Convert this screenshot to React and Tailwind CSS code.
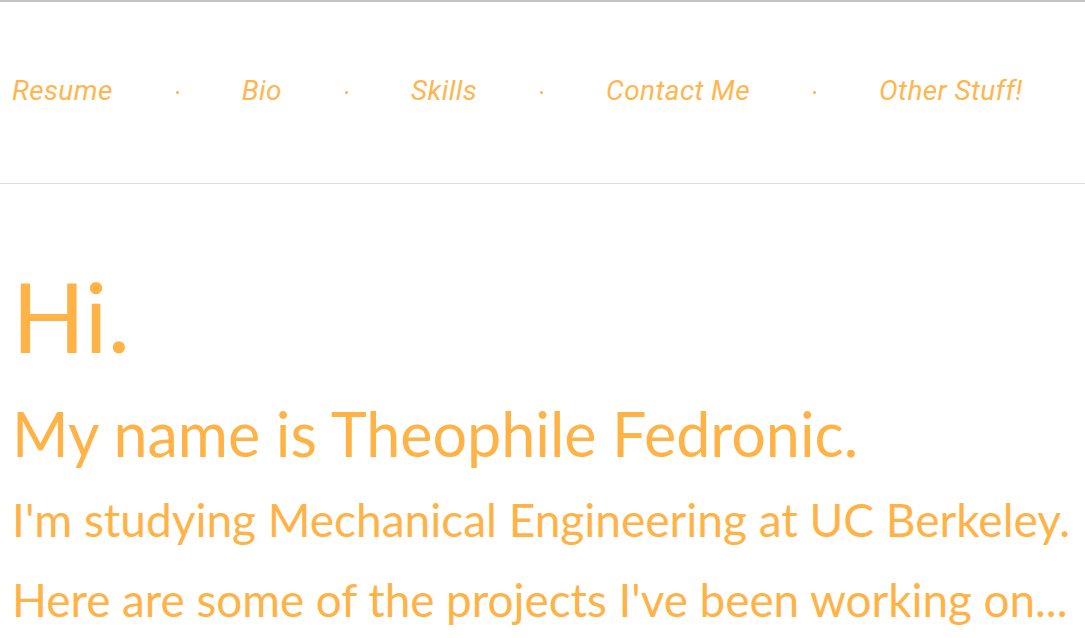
import React from 'react';

const links = ['Resume', 'Bio', 'Skills', 'Contact Me', 'Other Stuff!'];

function App() {
  return (
    <div className="min-h-screen bg-white border-t-2 border-[#c4c4c4] text-[#ffb347] font-[Lato,sans-serif]">
      <nav className="h-[182px] border-b border-[#dcdcdc] flex items-center px-3 pb-1">
        <ul className="flex items-center gap-[63px] text-[28px] italic tracking-[0.4px] text-[#ffb650] font-[Roboto,sans-serif]">
          {links.map((link, i) => (
            <React.Fragment key={link}>
              {i > 0 && <li className="w-[3px] h-[3px] mt-1 rounded-full bg-[#ffb347]" />}
              <li><a href="#">{link}</a></li>
            </React.Fragment>
          ))}
        </ul>
      </nav>
      <main className="px-3 pt-[84px] whitespace-nowrap">
        <h1 className="text-[96px] leading-[96px]">Hi.</h1>
        <h2 className="mt-[39px] text-[61px] leading-[61px]">My name is Theophile Fedronic.</h2>
        <p className="mt-[16px] text-[46px] leading-[80px]">I'm studying Mechanical Engineering at UC Berkeley.</p>
        <p className="text-[45.8px] leading-[80px]">Here are some of the projects I've been working on...</p>
      </main>
    </div>
  );
}

export default App;
